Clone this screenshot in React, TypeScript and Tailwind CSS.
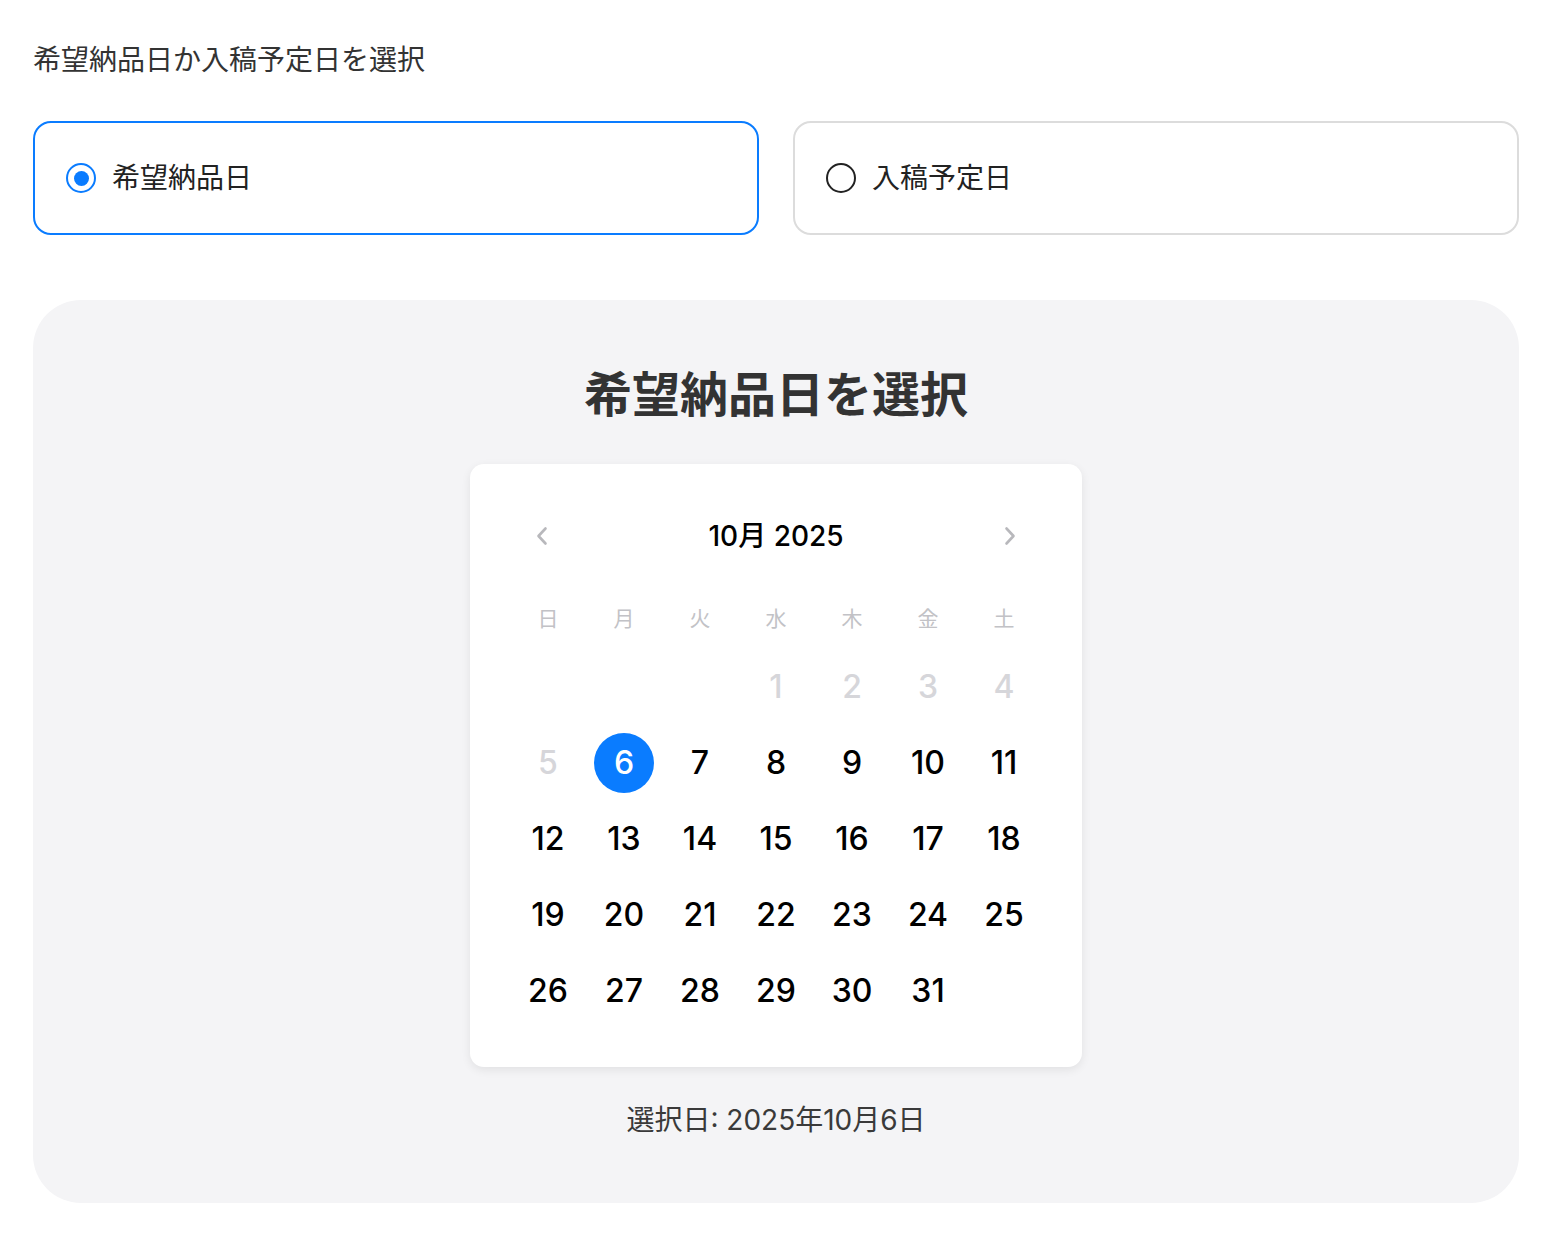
import React from "react";

const font = { fontFamily: 'Inter, "Noto Sans CJK JP", sans-serif' } as React.CSSProperties;

function Chevron({ dir }: { dir: "left" | "right" }) {
  return (
    <svg width="16" height="22" viewBox="0 0 16 22" fill="none" stroke="#b8b8bc" strokeWidth="2.6" strokeLinecap="round" strokeLinejoin="round">
      {dir === "left" ? <path d="M11.5 3.5 L4.5 11 L11.5 18.5" /> : <path d="M4.5 3.5 L11.5 11 L4.5 18.5" />}
    </svg>
  );
}

export default function App() {
  const weekdays = ["日", "月", "火", "水", "木", "金", "土"];
  const cells: (number | null)[] = [null, null, null];
  for (let d = 1; d <= 31; d++) cells.push(d);
  while (cells.length % 7 !== 0) cells.push(null);

  return (
    <div className="bg-white min-h-[1240px] px-[33px] pt-[38px]" style={font}>
      <div className="text-[28px] leading-[44px] text-[#333333]">希望納品日か入稿予定日を選択</div>

      <div className="mt-[39px] grid grid-cols-2 gap-[34px] w-[1486px]">
        <div className="h-[114px] rounded-[18px] border-2 border-[#0a7cff] flex items-center pl-[31px]">
          <span className="w-[30px] h-[30px] rounded-full border-2 border-[#0a7cff] flex items-center justify-center">
            <span className="w-[15px] h-[15px] rounded-full bg-[#0a7cff]" />
          </span>
          <span className="ml-[16px] text-[28px] text-[#222222]">希望納品日</span>
        </div>
        <div className="h-[114px] rounded-[18px] border-2 border-[#dcdcdc] flex items-center pl-[31px]">
          <span className="w-[30px] h-[30px] rounded-full border-2 border-[#222222]" />
          <span className="ml-[16px] text-[28px] text-[#222222]">入稿予定日</span>
        </div>
      </div>

      <div className="mt-[65px] w-[1486px] rounded-[48px] bg-[#f4f4f6] pt-[59px] pb-[63px] flex flex-col items-center">
        <h2 className="text-[48px] leading-[72px] font-bold text-[#333333]">希望納品日を選択</h2>

        <div className="mt-[33px] w-[612px] bg-white rounded-[14px] shadow-[0_3px_10px_rgba(0,0,0,0.08)] px-[40px] pt-[40px] pb-[38px]">
          <div className="h-[64px] flex items-center justify-between px-[24px]">
            <Chevron dir="left" />
            <span className="text-[28px] font-medium text-black">10月 2025</span>
            <Chevron dir="right" />
          </div>

          <div className="mt-[31px] grid grid-cols-7 h-[40px] items-center">
            {weekdays.map((w) => (
              <div key={w} className="text-center text-[21px] text-[#c2c2c6]">{w}</div>
            ))}
          </div>

          <div className="mt-[10px] grid grid-cols-7">
            {cells.map((d, i) => (
              <div key={i} className="h-[76px] flex items-center justify-center">
                {d === null ? null : d === 6 ? (
                  <span className="w-[60px] h-[60px] rounded-full bg-[#0a7cff] text-white text-[32px] font-medium flex items-center justify-center">6</span>
                ) : (
                  <span className={"text-[32px] font-medium " + (d <= 5 ? "text-[#d6d6da]" : "text-black")}>{d}</span>
                )}
              </div>
            ))}
          </div>
        </div>

        <div className="mt-[33px] text-[28px] leading-[40px] text-[#3a3a3a]">選択日: 2025年10月6日</div>
      </div>
    </div>
  );
}
